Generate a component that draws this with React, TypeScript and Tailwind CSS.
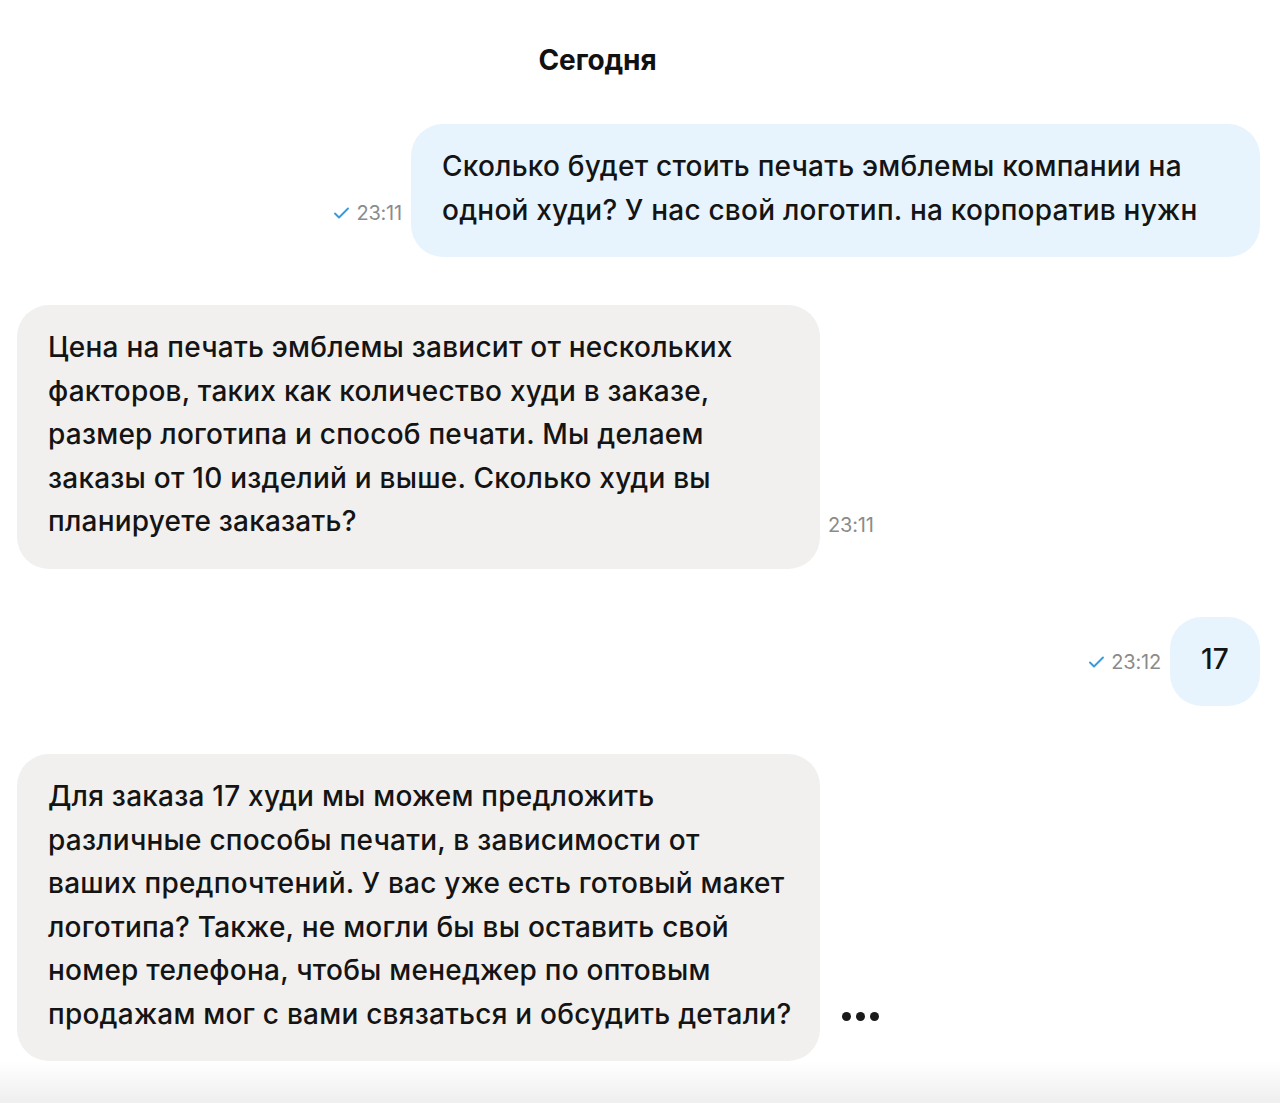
import type { ReactNode } from "react";

type Msg = {
    from: "me" | "bot";
    lines: string[];
    time?: string;
    typing?: boolean;
};

const messages: Msg[] = [
    {
        from: "me",
        lines: [
            "Сколько будет стоить печать эмблемы компании на",
            "одной худи? У нас свой логотип. на корпоратив нужн",
        ],
        time: "23:11",
    },
    {
        from: "bot",
        lines: [
            "Цена на печать эмблемы зависит от нескольких",
            "факторов, таких как количество худи в заказе,",
            "размер логотипа и способ печати. Мы делаем",
            "заказы от 10 изделий и выше. Сколько худи вы",
            "планируете заказать?",
        ],
        time: "23:11",
    },
    { from: "me", lines: ["17"], time: "23:12" },
    {
        from: "bot",
        lines: [
            "Для заказа 17 худи мы можем предложить",
            "различные способы печати, в зависимости от",
            "ваших предпочтений. У вас уже есть готовый макет",
            "логотипа? Также, не могли бы вы оставить свой",
            "номер телефона, чтобы менеджер по оптовым",
            "продажам мог с вами связаться и обсудить детали?",
        ],
        typing: true,
    },
];

function Check() {
    return (
        <svg width="17" height="14" viewBox="0 0 17 14" fill="none" className="mr-[6px]">
            <path d="M2 7.5l4 4L15 2.5" stroke="#3a9ad9" strokeWidth="1.9" strokeLinecap="round" strokeLinejoin="round" />
        </svg>
    );
}

function Time({ time, read }: { time: string; read?: boolean }) {
    return (
        <div className="flex items-center pb-[34px] text-[20px] leading-[20px] font-normal text-[#8b8b8b] tracking-[-0.01em]">
            {read && <Check />}
            {time}
        </div>
    );
}

function Typing() {
    return (
        <div className="flex items-center gap-[5px] pb-[40px] pl-[14px]">
            <span className="w-[9px] h-[9px] rounded-full bg-[#1a1a1a]" />
            <span className="w-[9px] h-[9px] rounded-full bg-[#1a1a1a]" />
            <span className="w-[9px] h-[9px] rounded-full bg-[#1a1a1a]" />
        </div>
    );
}

function Bubble({ msg }: { msg: Msg }) {
    const text: ReactNode = msg.lines.map((l, i) => (
        <span key={i} className="block whitespace-nowrap">{l}</span>
    ));
    if (msg.from === "me") {
        return (
            <div className="flex justify-end items-end gap-[9px]">
                {msg.time && <Time time={msg.time} read />}
                <div className="bg-[#e7f4fd] rounded-[32px] px-[31px] pt-[21px] pb-[25px] min-w-[89px] text-center">
                    <div className={msg.lines.length > 1 ? "w-[787px] text-left" : ""}>{text}</div>
                </div>
            </div>
        );
    }
    return (
        <div className="flex justify-start items-end gap-[8px]">
            <div className="bg-[#f1f0ee] rounded-[32px] pl-[31px] pr-[20px] pt-[21px] pb-[25px] w-[803px]">{text}</div>
            {msg.time && <Time time={msg.time} />}
            {msg.typing && <Typing />}
        </div>
    );
}

export default function App() {
    return (
        <div className="w-[1280px] h-[1103px] bg-white flex flex-col overflow-hidden" style={{ fontFamily: "Inter, 'Noto Sans', sans-serif" }}>
            <div className="flex-1 flex flex-col pl-[17px] pr-[20px]">
                <div className="h-[124px] flex justify-center pt-[43px] pr-[82px]">
                    <span className="text-[28px] leading-[34px] font-bold text-[#111] tracking-[-0.005em]">Сегодня</span>
                </div>
                <div className="flex flex-col gap-[48px] text-[28px] leading-[43.5px] font-medium text-[#141414] tracking-[0.008em]">
                    {messages.map((m, i) => (
                        <Bubble key={i} msg={m} />
                    ))}
                </div>
            </div>
            <div className="h-[42px] shrink-0 bg-gradient-to-b from-white to-[#efefef]" />
        </div>
    );
}
